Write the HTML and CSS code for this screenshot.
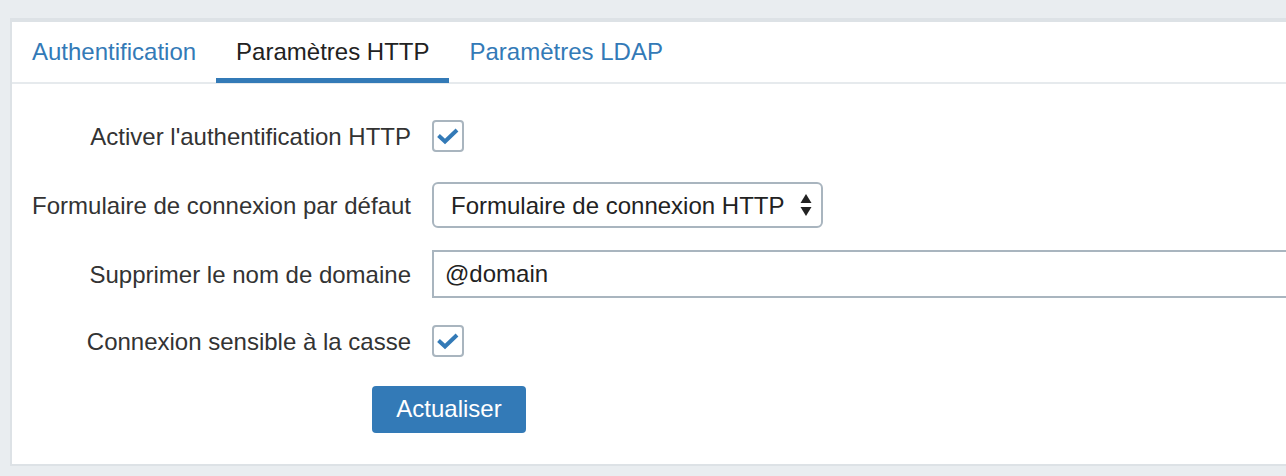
FILE: index.html
```html
<!DOCTYPE html>
<html lang="fr">

<head>
    <meta charset="UTF-8">
    <meta name="viewport" content="width=device-width, initial-scale=1.0">
    <title>Paramètres HTTP</title>

    <link rel="stylesheet" href="styles.css">
</head>

<body>

    <div class="panel">
        <!-- Tabs -->
        <ul class="tabs">
            <li class="tab"><a href="#">Authentification</a></li>
            <li class="tab active"><a href="#">Paramètres HTTP</a></li>
            <li class="tab"><a href="#">Paramètres LDAP</a></li>
        </ul>

        <!-- HTTP settings form -->
        <form class="settings">
            <label class="field-label">Activer l'authentification HTTP</label>
            <div class="field">
                <span class="check">
                    <svg width="28" height="28" viewBox="0 0 28 28">
                        <path d="M4.5 13.5 L11 19.5 L23 8" fill="none" stroke="#337ab7" stroke-width="4" stroke-linecap="butt" stroke-linejoin="miter" />
                    </svg>
                </span>
            </div>

            <label class="field-label">Formulaire de connexion par défaut</label>
            <div class="field">
                <div class="select-wrap">
                    <select class="select">
                        <option>Formulaire de connexion HTTP</option>
                    </select>
                    <svg class="select-arrows" width="12" height="22" viewBox="0 0 12 22">
                        <path d="M6 0 L11.5 9 L0.5 9 Z" fill="#222" />
                        <path d="M6 22 L11.5 13 L0.5 13 Z" fill="#222" />
                    </svg>
                </div>
            </div>

            <label class="field-label">Supprimer le nom de domaine</label>
            <div class="field">
                <input class="text-input" type="text" value="@domain">
            </div>

            <label class="field-label">Connexion sensible à la casse</label>
            <div class="field">
                <span class="check">
                    <svg width="28" height="28" viewBox="0 0 28 28">
                        <path d="M4.5 13.5 L11 19.5 L23 8" fill="none" stroke="#337ab7" stroke-width="4" stroke-linecap="butt" stroke-linejoin="miter" />
                    </svg>
                </span>
            </div>

            <div class="actions">
                <button type="submit" class="btn">Actualiser</button>
            </div>
        </form>
    </div>

</body>

</html>
```

FILE: styles.css
```css
* {
    margin: 0;
    padding: 0;
    box-sizing: border-box;
}

html, body {
    width: 100%;
    height: 100%;
    overflow: hidden;
    font-family: "Liberation Sans", Arial, sans-serif;
    background-color: #e9edf0;
    color: #333;
}

/* Panel */
.panel {
    margin: 18px 0 0 10px;
    width: 1400px;
    background-color: #fff;
    border: 2px solid #dde2e6;
    border-top-width: 4px;
}

/* Tabs */
.tabs {
    list-style: none;
    display: flex;
    align-items: flex-start;
    height: 62px;
    border-bottom: 2px solid #e6eaed;
}

.tab {
    height: 61px;
    padding: 3px 20px 0;
    border-bottom: 5px solid transparent;
}

.tab a {
    display: block;
    font-size: 24px;
    line-height: 53px;
    color: #337ab7;
    text-decoration: none;
}

.tab.active {
    border-bottom-color: #337ab7;
}

.tab.active a {
    color: #222;
}

/* Form */
.settings {
    display: grid;
    grid-template-columns: 399px 1fr;
    grid-template-rows: 68px 70px 68px 66px 70px;
    column-gap: 21px;
    align-items: center;
    padding: 18px 0 20px;
}

.field-label {
    text-align: right;
    font-size: 24px;
    color: #333;
    padding-top: 2px;
}

.field {
    display: flex;
    align-items: center;
}

.check {
    width: 32px;
    height: 32px;
    border: 2px solid #a9b5bf;
    border-radius: 4px;
    display: flex;
    align-items: center;
    justify-content: center;
}

.select-wrap {
    position: relative;
    width: 391px;
    height: 46px;
}

.select {
    appearance: none;
    width: 100%;
    height: 100%;
    border: 2px solid #a9b5bf;
    border-radius: 6px;
    background-color: #fff;
    padding-left: 17px;
    font-family: inherit;
    font-size: 24px;
    color: #222;
}

.select-arrows {
    position: absolute;
    right: 11px;
    top: 12px;
    pointer-events: none;
}

.text-input {
    width: 100%;
    height: 48px;
    border: 2px solid #a9b5bf;
    border-radius: 0;
    padding-left: 11px;
    font-family: inherit;
    font-size: 24px;
    color: #222;
}

.actions {
    grid-column: 1 / -1;
    padding-left: 360px;
}

.btn {
    width: 154px;
    height: 47px;
    background-color: #337ab7;
    color: #fff;
    border: none;
    border-radius: 4px;
    font-family: inherit;
    font-size: 24px;
    cursor: pointer;
}

.btn:hover {
    background-color: #286090;
}
```
